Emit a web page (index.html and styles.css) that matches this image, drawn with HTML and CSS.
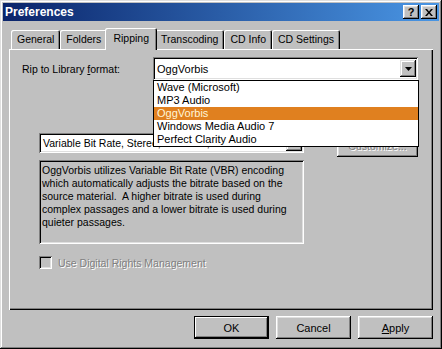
FILE: index.html
```html
<!DOCTYPE html>
<html>
<head>
<meta charset="utf-8">
<title>Preferences</title>
<link rel="stylesheet" href="styles.css">
</head>
<body>
<div class="window">
  <div class="titlebar">
    <span class="title">Preferences</span>
    <div class="tbtns">
      <span class="tbtn help">?</span>
      <span class="tbtn close"><svg width="8" height="7" viewBox="0 0 8 7"><path d="M0 0h2l2 2.4L6 0h2L5 3.5 8 7H6L4 4.6 2 7H0l3-3.5z" fill="#000"/></svg></span>
    </div>
  </div>
  <div class="tabs">
    <div class="tab">General</div>
    <div class="tab">Folders</div>
    <div class="tab active">Ripping</div>
    <div class="tab">Transcoding</div>
    <div class="tab">CD Info</div>
    <div class="tab">CD Settings</div>
  </div>
  <div class="panel">
    <div class="row1">
      <span class="lbl">Rip to Library <u>f</u>ormat:</span>
      <div class="combo combo-main">
        <span class="ctext">OggVorbis</span>
        <span class="cbtn"><svg width="7" height="4" viewBox="0 0 7 4"><path d="M0 0h7L3.5 4z" fill="#000"/></svg></span>
      </div>
    </div>
    <div class="row2">
      <div class="combo combo-quality">
        <span class="ctext">Variable Bit Rate, Stereo, 44.1 KHz, 16 Bit Stereo file</span>
        <span class="cbtn"><svg width="7" height="4" viewBox="0 0 7 4"><path d="M0 0h7L3.5 4z" fill="#000"/></svg></span>
      </div>
      <div class="btn btn-custom disabled">Customize...</div>
    </div>
    <div class="desc">OggVorbis utilizes Variable Bit Rate (VBR) encoding<br>which automatically adjusts the bitrate based on the<br>source material.&nbsp; A higher bitrate is used during<br>complex passages and a lower bitrate is used during<br>quieter passages.</div>
    <div class="check disabled"><span class="box"></span><span>Use Digital Rights Management</span></div>
    <ul class="dropdown">
      <li>Wave (Microsoft)</li>
      <li>MP3 Audio</li>
      <li class="sel">OggVorbis</li>
      <li>Windows Media Audio 7</li>
      <li>Perfect Clarity Audio</li>
    </ul>
  </div>
  <div class="buttons">
    <div class="btn default">OK</div>
    <div class="btn">Cancel</div>
    <div class="btn"><span><u>A</u>pply</span></div>
  </div>
</div>
</body>
</html>
```

FILE: styles.css
```css
* { box-sizing: border-box; }
html, body { margin: 0; padding: 0; }
body {
  width: 442px;
  height: 349px;
  overflow: hidden;
  background: #c0c0c0;
  font-family: "Liberation Sans", Arial, sans-serif;
  font-size: 10.5px;
  color: #000;
}
.window {
  width: 442px;
  height: 349px;
  padding: 3px;
  background: #c0c0c0;
  display: flex;
  flex-direction: column;
  box-shadow: inset -1px -1px #000, inset 1px 1px #dfdfdf, inset -2px -2px #808080, inset 2px 2px #fff;
}
.titlebar {
  height: 18px;
  flex: none;
  display: flex;
  align-items: center;
  padding: 0 2px;
  background: linear-gradient(to right, #0a246a, #4a96e4);
}
.title {
  flex: 1;
  color: #fff;
  font-weight: bold;
  font-size: 12px;
}
.tbtns { display: flex; gap: 2px; }
.tbtn {
  width: 16px;
  height: 14px;
  background: #c0c0c0;
  display: flex;
  align-items: center;
  justify-content: center;
  font-weight: bold;
  font-size: 11px;
  box-shadow: inset -1px -1px #000, inset 1px 1px #fff, inset -2px -2px #808080, inset 2px 2px #dfdfdf;
}
.tabs {
  flex: none;
  height: 28px;
  display: flex;
  align-items: flex-end;
  padding-left: 8px;
}
.tab {
  height: 19px;
  padding: 0 6px 1px;
  display: flex;
  align-items: center;
  font-size: 10.5px;
  background: #c0c0c0;
  border-radius: 2px 2px 0 0;
  box-shadow: inset 1px 1px #fff, inset -1px 0 #000, inset -2px 0 #808080;
}
.tab.active {
  height: 22px;
  padding: 0 8px 3px;
  margin: 0 -2px -1px;
  position: relative;
  z-index: 1;
}
.panel {
  flex: none;
  position: relative;
  height: 261px;
  margin: 0 6px;
  box-shadow: inset 1px 1px #fff, inset -1px -1px #000, inset -2px -2px #808080;
}
.row1 {
  display: flex;
  align-items: center;
  margin-top: 8px;
  padding: 0 15px 0 13px;
}
.lbl { flex: 1; }
.combo {
  display: flex;
  align-items: center;
  background: #fff;
  padding: 2px;
  box-shadow: inset 1px 1px #808080, inset -1px -1px #fff, inset 2px 2px #000, inset -2px -2px #dfdfdf;
}
.ctext {
  flex: 1;
  padding-left: 2px;
  overflow: hidden;
  white-space: nowrap;
}
.combo-main { width: 265px; height: 23px; font-size: 11px; }
.combo-main .cbtn { height: 17px; }
.cbtn {
  flex: none;
  width: 16px;
  height: 16px;
  background: #c0c0c0;
  display: flex;
  align-items: center;
  justify-content: center;
  box-shadow: inset -1px -1px #000, inset 1px 1px #dfdfdf, inset -2px -2px #808080, inset 2px 2px #fff;
}
.row2 {
  display: flex;
  align-items: flex-start;
  margin-top: 53px;
  padding-left: 30px;
}
.combo-quality { width: 265px; height: 20px; }
.btn {
  width: 75px;
  height: 23px;
  display: flex;
  align-items: center;
  justify-content: center;
  font-size: 11px;
  background: #c0c0c0;
  box-shadow: inset -1px -1px #000, inset 1px 1px #fff, inset -2px -2px #808080, inset 2px 2px #dfdfdf;
}
.btn.default {
  box-shadow: inset 0 0 0 1px #000, inset -2px -2px #000, inset 2px 2px #fff, inset -3px -3px #808080;
}
.btn-custom {
  width: 81px;
  height: 22px;
  margin: 2px 0 0 33px;
  font-size: 10.5px;
}
.disabled {
  color: #808080;
  text-shadow: 1px 1px #fff;
}
.desc {
  margin: 3px 0 0 30px;
  width: 265px;
  height: 84px;
  padding: 4px 3px;
  line-height: 13px;
  white-space: nowrap;
  box-shadow: inset 1px 1px #808080, inset -1px -1px #fff, inset 2px 2px #000, inset -2px -2px #dfdfdf;
}
.check {
  display: flex;
  align-items: center;
  gap: 6px;
  margin: 12px 0 0 30px;
}
.box {
  width: 13px;
  height: 13px;
  background: #c0c0c0;
  box-shadow: inset 1px 1px #808080, inset -1px -1px #fff, inset 2px 2px #000, inset -2px -2px #dfdfdf;
}
.dropdown {
  position: absolute;
  left: 144px;
  top: 31px;
  width: 266px;
  margin: 0;
  padding: 0;
  list-style: none;
  background: #fff;
  border: 1px solid #000;
  z-index: 2;
  font-size: 11px;
}
.dropdown li {
  height: 13px;
  line-height: 13px;
  padding-left: 3px;
  white-space: nowrap;
}
.dropdown li.sel {
  background: #e0801f;
  color: #fff6d8;
}
.buttons {
  flex: none;
  display: flex;
  justify-content: flex-end;
  gap: 7px;
  margin-top: 6px;
  padding-right: 6px;
}
```
